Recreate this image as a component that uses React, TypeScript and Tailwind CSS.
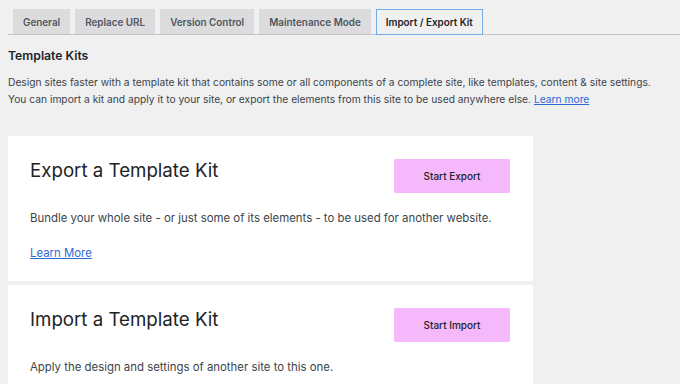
const tabs = ["General", "Replace URL", "Version Control", "Maintenance Mode", "Import / Export Kit"];

function KitCard({ title, action, text, link }: { title: string; action: string; text: string; link?: string }) {
  return (
    <div className="w-[525px] bg-white px-[22px] pt-[18px] pb-[18px]">
      <div className="flex items-start justify-between">
        <h3 className="mt-[2px] text-[18.7px] leading-[30px] text-[#1d2327]">{title}</h3>
        <button className="mt-[5px] mr-[1px] h-[34px] w-[116px] rounded-[2px] bg-[#f4b8fb] text-[10px] font-medium text-[#1d2327]">
          {action}
        </button>
      </div>
      <p className="mt-[15px] text-[11.4px] leading-[20px] text-[#3c434a]">{text}</p>
      {link && (
        <a href="#" className="mt-[15px] block w-fit text-[11.4px] leading-[20px] text-[#2c6ad6] underline">
          {link}
        </a>
      )}
    </div>
  );
}

export default function App() {
  return (
    <div className="h-[384px] w-[680px] overflow-hidden bg-[#f0f0f1] font-['Inter','Liberation_Sans',sans-serif]">
      <nav className="ml-2 flex border-b border-[#c3c4c7] pt-[9px]">
        {tabs.map((t, i) => {
          const active = i === tabs.length - 1;
          return (
            <div
              key={t}
              className={
                active
                  ? "-mb-px ml-[5px] flex h-[26px] items-center border border-[#72aee6] bg-[#f0f0f1] px-[9px] text-[9.9px] font-semibold text-[#1d2327]"
                  : "-mb-px ml-[5px] flex h-[26px] items-center border border-[#dcdcde] border-b-[#c3c4c7] bg-[#dcdcde] px-[9px] text-[9.9px] font-semibold text-[#50575e]"
              }
            >
              {t}
            </div>
          );
        })}
      </nav>

      <div className="px-2">
        <h2 className="mt-[11px] text-[12.2px] font-semibold leading-[20px] text-[#1d2327]">Template Kits</h2>
        <p className="mt-[8px] text-[10.25px] leading-[17px] text-[#3c434a]">
          Design sites faster with a template kit that contains some or all components of a complete site, like templates, content &amp; site settings.
          <br />
          You can import a kit and apply it to your site, or export the elements from this site to be used anywhere else.{" "}
          <a href="#" className="text-[#2c6ad6] underline">Learn more</a>
        </p>

        <div className="mt-[28px] flex flex-col gap-[4px]">
          <KitCard
            title="Export a Template Kit"
            action="Start Export"
            text="Bundle your whole site - or just some of its elements - to be used for another website."
            link="Learn More"
          />
          <KitCard
            title="Import a Template Kit"
            action="Start Import"
            text="Apply the design and settings of another site to this one."
          />
        </div>
      </div>
    </div>
  );
}
